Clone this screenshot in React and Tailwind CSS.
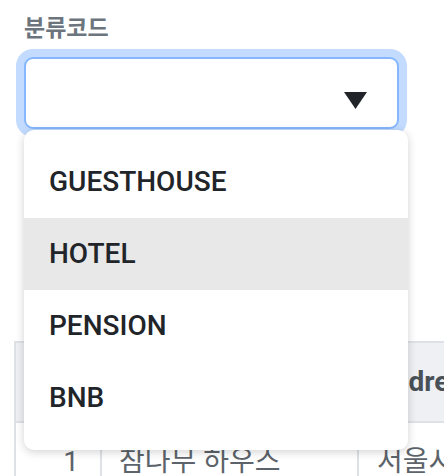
import React from 'react';

const options = ['GUESTHOUSE', 'HOTEL', 'PENSION', 'BNB'];

export default function App() {
  return (
    <div className="relative h-[476px] w-[444px] overflow-hidden bg-white font-['Roboto','Noto_Sans_CJK_KR',sans-serif]">
      <div className="px-[24px] pt-[10px]">
        <label className="block font-['Noto_Sans_CJK_KR',sans-serif] text-[23px] font-bold leading-[33px] text-[#6c757d]">분류코드</label>
        <div className="mt-[14px] flex h-[72px] w-[375px] items-start justify-end rounded-[9px] border-2 border-[#86b7fe] bg-white pr-[30px] pt-[33px] shadow-[0_0_0_8px_rgba(13,110,253,0.25)]">
          <svg width="23" height="17" viewBox="0 0 23 17">
            <path d="M0 0H23L11.5 17Z" fill="#212529" />
          </svg>
        </div>
      </div>

      <div className="ml-[14px] mt-[212px]">
        <table className="w-[700px] table-fixed border-separate border-spacing-0 text-[28px] leading-[42px]">
          <thead>
            <tr>
              <th className="w-[86px] border-y-2 border-l-2 border-[#dee2e6] bg-[#eef0f4] py-[18px] pr-[20px] text-right font-bold text-[#495057]">No</th>
              <th className="w-[257px] border-y-2 border-l-2 border-[#dee2e6] bg-[#eef0f4] py-[18px] pl-[18px] text-left font-bold text-[#495057]">Name</th>
              <th className="border-y-2 border-l-2 border-[#dee2e6] bg-[#eef0f4] py-[18px] pl-[15px] text-left font-bold text-[#495057]">Address</th>
            </tr>
          </thead>
          <tbody>
            <tr>
              <td className="border-l-2 border-[#dee2e6] py-[18px] pr-[21px] text-right text-[#5c636a]">1</td>
              <td className="border-l-2 border-[#dee2e6] py-[18px] pl-[17px] text-[#5c636a]">참나무 하우스</td>
              <td className="border-l-2 border-[#dee2e6] py-[18px] pl-[18px] text-[#5c636a]">서울시 종로구</td>
            </tr>
          </tbody>
        </table>
      </div>

      <ul className="absolute left-[24px] top-[130px] h-[320px] w-[384px] rounded-[10px] bg-white py-[16px] shadow-[0_2px_10px_rgba(0,0,0,0.18)]">
        {options.map(o => (
          <li key={o} className={`flex h-[72px] items-center pl-[25px] text-[28px] font-medium text-[#212529] ${o === 'HOTEL' ? 'bg-[#e8e8e8]' : ''}`}>
            {o}
          </li>
        ))}
      </ul>
    </div>
  );
}
